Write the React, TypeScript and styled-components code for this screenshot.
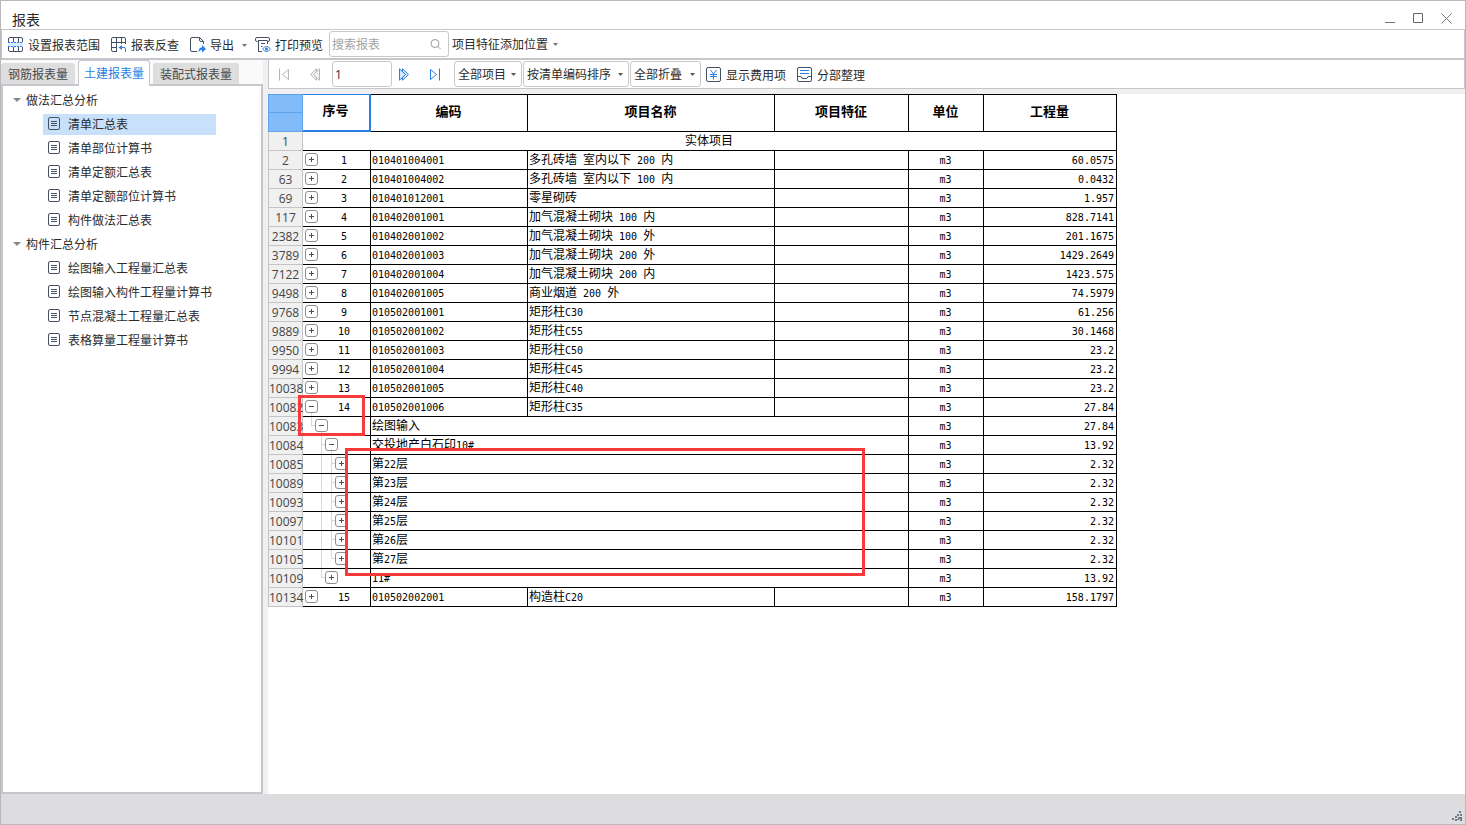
import React from "react";
import styled, { createGlobalStyle, css } from "styled-components";

const line = "#c5c7cc";
const ink = "#465064";
const blue = "#2a7fe4";

const GlobalStyle = createGlobalStyle`
  * { box-sizing: border-box; }
  body { margin: 0; background: #fff; }
  body, button, input, select {
    font-family: "Noto Sans CJK SC", sans-serif;
    font-size: 12px;
    line-height: 18px;
    color: #2b2b2b;
  }
  button, input, select { margin: 0; padding: 0; border: 0; background: none; }
  svg { display: block; flex: none; }
`;

const Shell = styled.div`
  display: flex;
  flex-direction: column;
  min-height: 100vh;
  border: 1px solid #b9b9bb;
`;

const TitleBar = styled.header`
  display: flex;
  align-items: flex-end;
  justify-content: space-between;
  height: 28px;
  padding: 0 11px;
`;

const Title = styled.h1`
  margin: 0;
  font-size: 14px;
  line-height: 20px;
  font-weight: 400;
`;

const WindowButtons = styled.div`
  display: flex;
  gap: 12px;
  padding-bottom: 2px;
`;

const WindowButton = styled.button`
  display: grid;
  place-items: center;
  width: 16px;
  height: 16px;
`;

const MainToolbar = styled.div`
  display: flex;
  align-items: center;
  height: 31px;
  padding-left: 6px;
  border: 1px solid ${line};
  border-bottom-width: 2px;
`;

const ToolButton = styled.button<{ $after?: number }>`
  display: flex;
  align-items: center;
  gap: 4px;
  margin-right: ${(p) => p.$after ?? 11}px;
  padding-top: 2px;
  white-space: nowrap;
`;

const MenuButton = styled.button`
  display: flex;
  align-items: center;
  gap: 5px;
  white-space: nowrap;
`;

const ArrowButton = styled.button`
  display: grid;
  place-items: center;
  width: 21px;
  height: 24px;
  padding-top: 2px;
`;

const SearchBox = styled.div`
  display: flex;
  align-items: center;
  width: 120px;
  height: 26px;
  margin-right: 3px;
  padding: 0 6px 0 2px;
  border: 1px solid #c9c9c9;
  border-radius: 3px;
`;

const SearchInput = styled.input`
  flex: 1;
  min-width: 0;
  outline: 0;
  &::placeholder { color: #a3a3a3; }
`;

const Body = styled.div`
  display: flex;
  flex: 1;
  background: #f0f0f0;
`;

const Sidebar = styled.aside`
  display: flex;
  flex-direction: column;
  width: 262px;
  margin-right: 5px;
  flex: none;
`;

const TabBar = styled.div`
  display: flex;
  align-items: flex-end;
  gap: 3px;
  height: 24px;
  background: #fafafa;
`;

const Tab = styled.button<{ $active?: boolean }>`
  height: 21px;
  padding: 0 7px;
  border-radius: 3px 3px 0 0;
  background: #dedede;
  color: #4a4a4a;
  white-space: nowrap;
  ${(p) =>
    p.$active &&
    css`
      position: relative;
      height: 26px;
      margin-bottom: -2px;
      padding: 0 5px 2px;
      border: 1px solid ${line};
      border-bottom: 0;
      background: #fff;
      color: ${blue};
    `}
`;

const TreePanel = styled.nav`
  flex: 1;
  padding: 2px 0 0 10px;
  border: 2px solid ${line};
  background: #fff;
`;

const TreeBranch = styled.ul`
  display: flex;
  flex-direction: column;
  margin: 0;
  padding: 0;
  list-style: none;
`;

const TreeRoot = styled(TreeBranch)`
  width: max-content;
`;

const GroupButton = styled.button`
  display: flex;
  align-items: center;
  gap: 5px;
  height: 24px;
`;

const TreeLink = styled.a<{ $selected?: boolean }>`
  display: flex;
  align-items: center;
  gap: 7px;
  height: 21px;
  margin: 2px 0 1px 30px;
  padding: 0 4px 1px 5px;
  background: ${(p) => (p.$selected ? "#c8e0fa" : "transparent")};
  color: #2b2b2b;
  text-decoration: none;
  white-space: nowrap;
`;

const Content = styled.main`
  display: flex;
  flex-direction: column;
  flex: 1;
  min-width: 0;
`;

const ReportToolbar = styled.div`
  display: flex;
  align-items: center;
  height: 29px;
  margin-bottom: 5px;
  border: 1px solid ${line};
  border-top: 0;
  background: #fff;
`;

const PageButton = styled.button`
  display: grid;
  place-items: center;
  width: 31px;
  height: 25px;
`;

const PageInput = styled.input`
  width: 60px;
  height: 26px;
  padding: 0 2px;
  margin: 0 -3px 0 1px;
  border: 1px solid #c9c9c9;
  border-radius: 3px;
  font-family: "Open Sans", sans-serif;
`;

const Filters = styled.div`
  display: flex;
  gap: 1px;
  padding-left: 3px;
`;

const SelectBox = styled.span<{ $width: number }>`
  display: grid;
  align-items: center;
  width: ${(p) => p.$width}px;
  height: 26px;
  border: 1px solid #c9c9c9;
  border-radius: 3px;
  & > * { grid-area: 1 / 1; }
  & > svg { justify-self: end; margin-right: 5px; pointer-events: none; }
`;

const Select = styled.select`
  appearance: none;
  width: 100%;
  height: 24px;
  padding-left: 3px;
`;

const Actions = styled.div`
  display: flex;
  padding-left: 5px;
`;

const GridArea = styled.div`
  flex: 1;
  overflow-x: auto;
  background: #fff;
`;

const GridWrap = styled.div`
  position: relative;
  width: max-content;
`;

const Grid = styled.table`
  table-layout: fixed;
  width: 849px;
  border-collapse: separate;
  border-spacing: 0;
  color: #000;
`;

const HeadCell = styled.th<{ $current?: boolean }>`
  height: 38px;
  padding: 0 1px 5px 0;
  border: solid #000;
  border-width: 1px 1px 1px 0;
  font-size: 13px;
  font-weight: 700;
  ${(p) =>
    p.$current &&
    css`
      border-color: ${blue};
      border-width: 1px 2px 2px 0;
    `}
`;

const Corner = styled.td`
  padding: 0;
  border: 1px solid #5fa3ea;
  background: linear-gradient(#5fa3ea, #5fa3ea) 0 17px / 100% 1px no-repeat #82bbfa;
`;

const RowHead = styled.th`
  height: 19px;
  padding: 2px 0 0;
  border: solid #c4c4c4;
  border-width: 0 1px 1px;
  background: #f0f0f0;
  color: #444;
  font: 400 12px/16px "Open Sans", sans-serif;
  text-align: center;
`;

const Cell = styled.td<{ $align?: "left" | "center" | "right" }>`
  height: 19px;
  padding: 0 2px 0 1px;
  border: solid #000;
  border-width: 0 1px 1px 0;
  line-height: 16px;
  text-align: ${(p) => p.$align ?? "left"};
  vertical-align: top;
  white-space: nowrap;
  overflow: hidden;
`;

const Latin = styled.span`
  font-family: "DejaVu Sans Mono", monospace;
  font-size: 10px;
  line-height: 0;
  white-space: pre;
`;

const TreeCell = styled.div`
  display: flex;
  height: 18px;
  margin-right: -2px;
  padding-left: 1px;
`;

const Ordinal = styled.span`
  flex: 1;
  text-align: center;
`;

type GuideKind = "none" | "line" | "tee" | "end";

const Guide = styled.span<{ $kind: GuideKind }>`
  width: 10px;
  ${(p) =>
    p.$kind !== "none" &&
    css`
      background:
        linear-gradient(#d8d8d8, #d8d8d8) 6px 0 / 1px ${p.$kind === "end" ? "9px" : "100%"} no-repeat,
        linear-gradient(#d8d8d8, #d8d8d8) 6px 8px / ${p.$kind === "line" ? "0" : "4px"} 1px no-repeat;
    `}
`;

const Expander = styled.button`
  width: 13px;
  height: 18px;
`;

const Mark = styled.div<{ $x: number; $y: number; $w: number; $h: number }>`
  position: absolute;
  left: ${(p) => p.$x}px;
  top: ${(p) => p.$y}px;
  width: ${(p) => p.$w}px;
  height: ${(p) => p.$h}px;
  border: 3px solid #f93a3a;
  pointer-events: none;
`;

const StatusBar = styled.footer`
  display: flex;
  align-items: flex-end;
  justify-content: flex-end;
  height: 30px;
  padding: 0 3px 3px 0;
  background: #dddddf;
`;

const Caret = ({ size = 5, color = "#777" }: { size?: number; color?: string }) => (
  <svg width={size} height={size === 5 ? 3 : 4} viewBox="0 0 10 6" preserveAspectRatio="none">
    <path d="M0 0h10L5 6z" fill={color} />
  </svg>
);

const Icon = ({ children, width = 16, height = 16 }: { children: React.ReactNode; width?: number; height?: number }) => (
  <svg width={width} height={height} viewBox={`0 0 ${width} ${height}`} fill="none" stroke={ink}>
    {children}
  </svg>
);

const RangeIcon = () => (
  <Icon>
    <path d="M.5 5V2Q.5.5 2 .5h11q1.500 0 1.500 1.500v3M.5 10v3Q.5 14.500 2 14.500h11q1.500 0 1.500-1.500V10M5.500.5V5M10.500.5V5M5.500 10v4.500M10.500 10v4.500" />
    <path d="M0 5h15v5H0z" fill="#d9ebff" stroke="none" />
    <path d="M0 5.500h15M0 9.500h15" stroke={blue} strokeDasharray="2 1" />
  </Icon>
);

const TraceIcon = () => (
  <Icon>
    <path d="M14.500 7V2q0-1.500-1.500-1.500H2Q.5.5.5 2v11q0 1.500 1.500 1.500h4M.5 5.500h14M.5 10.500h5M5.500.5V14.500M10.500.5V7" />
    <path d="M9 10.500h4q1.500 0 1.500 1.500v3" stroke={blue} />
    <path d="M11 8v5l-3.500-2.500z" fill={blue} stroke="none" />
  </Icon>
);

const ExportIcon = () => (
  <Icon>
    <path d="M13.500 7V4.500L9.500.5H2Q.5.5.5 2v11q0 1.500 1.500 1.500h5M9.500.5V3q0 1.500 1.500 1.500h2.500" />
    <path d="M8.500 15.500c0-3.500 1-5 3.500-5V8l4 4-4 3.500v-2.500c-1.500 0-2.500.5-3.500 2.500z" fill={blue} stroke="none" />
  </Icon>
);

const PreviewIcon = () => (
  <Icon>
    <path d="M2.500 4.500H2Q.5 4.500.5 3V2Q.5.5 2 .5h11q1.500 0 1.500 1.500v1q0 1.500-1.500 1.500h-.5M3 3.500h9M3.500 3.500v11h3.500M12.500 3.500V7M6 6.500h4M6 9.500h1.500" />
    <path d="M7.500 12q4-5 8 0-4 5-8 0z" stroke={blue} fill="#fff" />
    <circle cx="11.500" cy="12" r="1.500" fill={blue} stroke="none" />
  </Icon>
);

const YenIcon = () => (
  <Icon>
    <rect x=".5" y=".5" width="14" height="14" rx="1.500" />
    <path d="M4.500 3l3 4 3-4M4 7.500h7M4 9.500h7M7.500 7v5.500" stroke={blue} />
  </Icon>
);

const SectionIcon = () => (
  <Icon>
    <rect x=".5" y=".5" width="14" height="14" rx="1.500" />
    <path d="M.5 9.500h3.500q.5 2 2 2h3q1.500 0 2-2h3.500" />
    <path d="M3 3.500h9M3 6.500h9" stroke={blue} />
  </Icon>
);

const DocIcon = () => (
  <Icon width={13} height={14}>
    <rect x=".5" y=".5" width="11" height="12" rx="1.500" />
    <path d="M3 4.500h6M3 6.500h6M3 8.500h6" />
  </Icon>
);

const PageIcon = ({ kind }: { kind: "first" | "prev" | "next" | "last" }) => {
  const active = kind === "next" || kind === "last";
  const double = kind === "prev" || kind === "next";
  return (
    <svg width="13" height="13" viewBox="0 0 13 13" fill="none" stroke={active ? blue : "#b5b5b5"}>
      <g transform={kind === "first" || kind === "prev" ? "translate(12 0) scale(-1 1)" : undefined}>
        {double ? (
          <>
            <path d="M4.500 .8l6 5.700-6 5.700z" fill={active ? "#d4e7fc" : "#f2f2f2"} />
            <path d="M1.500 .8v11.400l6-5.700z" fill={active ? "#d4e7fc" : "#f2f2f2"} />
          </>
        ) : (
          <path d="M1.500 1.500v10l6-5zM10.500.5v12" />
        )}
      </g>
    </svg>
  );
};

const ExpandIcon = ({ open }: { open: boolean }) => (
  <svg width="13" height="18" viewBox="0 0 13 18" fill="none">
    {open && <path d="M6.500 15v3" stroke="#d8d8d8" />}
    <rect x=".5" y="2.500" width="12" height="12" rx="2.500" stroke="#8e8e8e" fill="#fff" />
    <path d={open ? "M4 8.500h5" : "M4 8.500h5M6.500 6v5"} stroke={ink} />
  </svg>
);

const tree = [
  { name: "做法汇总分析", items: ["清单汇总表", "清单部位计算书", "清单定额汇总表", "清单定额部位计算书", "构件做法汇总表"] },
  { name: "构件汇总分析", items: ["绘图输入工程量汇总表", "绘图输入构件工程量计算书", "节点混凝土工程量汇总表", "表格算量工程量计算书"] },
];

type Row = { id: number; no?: number; code: string; name?: string; qty: string; guides?: GuideKind[]; open?: boolean };

const rows: Row[] = [
  { id: 2, no: 1, code: "010401004001", name: "多孔砖墙 室内以下 200 内", qty: "60.0575" },
  { id: 63, no: 2, code: "010401004002", name: "多孔砖墙 室内以下 100 内", qty: "0.0432" },
  { id: 69, no: 3, code: "010401012001", name: "零星砌砖", qty: "1.957" },
  { id: 117, no: 4, code: "010402001001", name: "加气混凝土砌块 100 内", qty: "828.7141" },
  { id: 2382, no: 5, code: "010402001002", name: "加气混凝土砌块 100 外", qty: "201.1675" },
  { id: 3789, no: 6, code: "010402001003", name: "加气混凝土砌块 200 外", qty: "1429.2649" },
  { id: 7122, no: 7, code: "010402001004", name: "加气混凝土砌块 200 内", qty: "1423.575" },
  { id: 9498, no: 8, code: "010402001005", name: "商业烟道 200 外", qty: "74.5979" },
  { id: 9768, no: 9, code: "010502001001", name: "矩形柱C30", qty: "61.256" },
  { id: 9889, no: 10, code: "010502001002", name: "矩形柱C55", qty: "30.1468" },
  { id: 9950, no: 11, code: "010502001003", name: "矩形柱C50", qty: "23.2" },
  { id: 9994, no: 12, code: "010502001004", name: "矩形柱C45", qty: "23.2" },
  { id: 10038, no: 13, code: "010502001005", name: "矩形柱C40", qty: "23.2" },
  { id: 10082, no: 14, code: "010502001006", name: "矩形柱C35", qty: "27.84", open: true },
  { id: 10083, code: "绘图输入", qty: "27.84", guides: ["end"], open: true },
  { id: 10084, code: "交投地产白石印10#", qty: "13.92", guides: ["none", "tee"], open: true },
  { id: 10085, code: "第22层", qty: "2.32", guides: ["none", "line", "tee"] },
  { id: 10089, code: "第23层", qty: "2.32", guides: ["none", "line", "tee"] },
  { id: 10093, code: "第24层", qty: "2.32", guides: ["none", "line", "tee"] },
  { id: 10097, code: "第25层", qty: "2.32", guides: ["none", "line", "tee"] },
  { id: 10101, code: "第26层", qty: "2.32", guides: ["none", "line", "tee"] },
  { id: 10105, code: "第27层", qty: "2.32", guides: ["none", "line", "end"] },
  { id: 10109, code: "11#", qty: "13.92", guides: ["none", "end"] },
  { id: 10134, no: 15, code: "010502002001", name: "构造柱C20", qty: "158.1797" },
];

/* Latin runs use a half-width face so that two of them fill one Chinese glyph. */
const Mixed = ({ text }: { text: string }) => (
  <>
    {text.split(/([\x20-\x7e]+)/).map((run, i) => (i % 2 ? <Latin key={i}>{run}</Latin> : run))}
  </>
);

const Dropdown = ({ label, value, width }: { label: string; value: string; width: number }) => (
  <SelectBox $width={width}>
    <Select aria-label={label}>
      <option>{value}</option>
    </Select>
    <Caret color="#555" />
  </SelectBox>
);

const ReportGrid = () => (
  <GridWrap>
    <Grid>
      <colgroup>
        {[35, 68, 157, 247, 134, 75, 133].map((w, i) => (
          <col key={i} width={w} />
        ))}
      </colgroup>
      <thead>
        <tr>
          <Corner />
          <HeadCell $current>序号</HeadCell>
          {["编码", "项目名称", "项目特征", "单位", "工程量"].map((h) => (
            <HeadCell key={h}>{h}</HeadCell>
          ))}
        </tr>
      </thead>
      <tbody>
        <tr>
          <RowHead>1</RowHead>
          <Cell colSpan={6} $align="center">实体项目</Cell>
        </tr>
        {rows.map((r) => (
          <tr key={r.id}>
            <RowHead>{r.id}</RowHead>
            <Cell>
              <TreeCell>
                {r.guides?.map((g, i) => <Guide key={i} $kind={g} />)}
                <Expander aria-label={r.open ? "收起" : "展开"}>
                  <ExpandIcon open={!!r.open} />
                </Expander>
                {r.no && <Ordinal><Latin>{r.no}</Latin></Ordinal>}
              </TreeCell>
            </Cell>
            <Cell colSpan={r.name ? 1 : 3}><Mixed text={r.code} /></Cell>
            {r.name && <Cell><Mixed text={r.name} /></Cell>}
            {r.name && <Cell />}
            <Cell $align="center"><Latin>m3</Latin></Cell>
            <Cell $align="right"><Latin>{r.qty}</Latin></Cell>
          </tr>
        ))}
      </tbody>
    </Grid>
    <Mark $x={30} $y={301} $w={67} $h={41} />
    <Mark $x={77} $y={354} $w={520} $h={128} />
  </GridWrap>
);

export default function App() {
  return (
    <>
      <GlobalStyle />
      <Shell>
        <TitleBar>
          <Title>报表</Title>
          <WindowButtons>
            <WindowButton aria-label="最小化">
              <svg width="12" height="12" stroke="#777"><path d="M1 9.500h10" /></svg>
            </WindowButton>
            <WindowButton aria-label="最大化">
              <svg width="12" height="12" fill="none" stroke="#666"><path d="M1.500.500h9v9h-9z" /></svg>
            </WindowButton>
            <WindowButton aria-label="关闭">
              <svg width="12" height="12" stroke="#777"><path d="M1.500.500l10 10M11.500.500l-10 10" /></svg>
            </WindowButton>
          </WindowButtons>
        </TitleBar>

        <MainToolbar>
          <ToolButton><RangeIcon />设置报表范围</ToolButton>
          <ToolButton><TraceIcon />报表反查</ToolButton>
          <ToolButton $after={0}><ExportIcon />导出</ToolButton>
          <ArrowButton aria-label="导出选项"><Caret /></ArrowButton>
          <ToolButton $after={6}><PreviewIcon />打印预览</ToolButton>
          <SearchBox>
            <SearchInput type="search" aria-label="搜索报表" placeholder="搜索报表" />
            <svg width="12" height="12" fill="none" stroke="#999">
              <circle cx="5" cy="5.500" r="4" />
              <path d="M8 8.500l2.500 2.500" />
            </svg>
          </SearchBox>
          <MenuButton>项目特征添加位置<Caret /></MenuButton>
        </MainToolbar>

        <Body>
          <Sidebar>
            <TabBar>
              <Tab>钢筋报表量</Tab>
              <Tab $active>土建报表量</Tab>
              <Tab>装配式报表量</Tab>
            </TabBar>
            <TreePanel>
              <TreeRoot>
                {tree.map((group, g) => (
                  <li key={group.name}>
                    <GroupButton><Caret size={8} color="#888" />{group.name}</GroupButton>
                    <TreeBranch>
                      {group.items.map((item, i) => (
                        <li key={item}>
                          <TreeLink href="#" $selected={g === 0 && i === 0}><DocIcon />{item}</TreeLink>
                        </li>
                      ))}
                    </TreeBranch>
                  </li>
                ))}
              </TreeRoot>
            </TreePanel>
          </Sidebar>

          <Content>
            <ReportToolbar>
              <PageButton aria-label="首页"><PageIcon kind="first" /></PageButton>
              <PageButton aria-label="上一页"><PageIcon kind="prev" /></PageButton>
              <PageInput aria-label="页码" defaultValue="1" />
              <PageButton aria-label="下一页"><PageIcon kind="next" /></PageButton>
              <PageButton aria-label="末页"><PageIcon kind="last" /></PageButton>
              <Filters>
                <Dropdown label="项目范围" value="全部项目" width={68} />
                <Dropdown label="排序方式" value="按清单编码排序" width={106} />
                <Dropdown label="折叠方式" value="全部折叠" width={71} />
              </Filters>
              <Actions>
                <ToolButton><YenIcon />显示费用项</ToolButton>
                <ToolButton><SectionIcon />分部整理</ToolButton>
              </Actions>
            </ReportToolbar>
            <GridArea>
              <ReportGrid />
            </GridArea>
          </Content>
        </Body>

        <StatusBar>
          <svg width="10" height="10" fill="#737a86">
            <path d="M7 0h2v2H7zM5 3h2v2H5zM8 3h2v2H8zM3 5h2v2H3zM6 6h4v2H6zM0 7h2v2H0zM3 8h2v2H3zM8 8h2v2H8zM5 8h2v1H5z" />
          </svg>
        </StatusBar>
      </Shell>
    </>
  );
}
